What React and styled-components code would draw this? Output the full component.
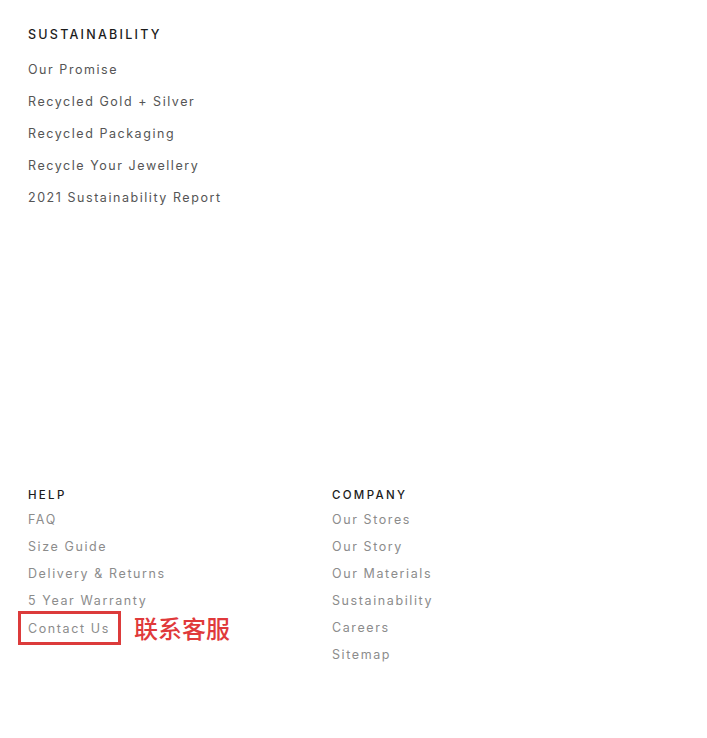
import React from 'react';
import styled, { createGlobalStyle } from 'styled-components';

const sustainability = [
  'Our Promise',
  'Recycled Gold + Silver',
  'Recycled Packaging',
  'Recycle Your Jewellery',
  '2021 Sustainability Report',
];

const help = ['FAQ', 'Size Guide', 'Delivery & Returns', '5 Year Warranty'];

const company = ['Our Stores', 'Our Story', 'Our Materials', 'Sustainability', 'Careers', 'Sitemap'];

export default function App() {
  return (
    <Page>
      <GlobalStyle />
      <Section>
        <Heading>SUSTAINABILITY</Heading>
        <TopList>
          {sustainability.map((item) => (
            <TopLink key={item}>{item}</TopLink>
          ))}
        </TopList>
      </Section>

      <FooterGrid>
        <Column>
          <SmallHeading>HELP</SmallHeading>
          <FooterList>
            {help.map((item) => (
              <FooterLink key={item}>{item}</FooterLink>
            ))}
            <AnnotatedRow>
              <Highlight>
                <FooterLink>Contact Us</FooterLink>
              </Highlight>
              <Note>联系客服</Note>
            </AnnotatedRow>
          </FooterList>
        </Column>
        <Column>
          <SmallHeading>COMPANY</SmallHeading>
          <FooterList>
            {company.map((item) => (
              <FooterLink key={item}>{item}</FooterLink>
            ))}
          </FooterList>
        </Column>
      </FooterGrid>
    </Page>
  );
}

const GlobalStyle = createGlobalStyle`
  body {
    margin: 0;
    background: #ffffff;
    font-family: Inter, 'Noto Sans', sans-serif;
  }
`;

const Page = styled.div`
  width: 707px;
  height: 738px;
  padding: 25px 0 0 28px;
  box-sizing: border-box;
  overflow: hidden;
`;

const Section = styled.div`
  display: flex;
  flex-direction: column;
`;

const Heading = styled.div`
  font-size: 12.5px;
  line-height: 20px;
  font-weight: 500;
  letter-spacing: 2.25px;
  color: #1c1c1c;
`;

const TopList = styled.div`
  display: flex;
  flex-direction: column;
  margin-top: 9px;
`;

const TopLink = styled.div`
  font-size: 12.5px;
  line-height: 32px;
  letter-spacing: 1.55px;
  color: #555555;
`;

const FooterGrid = styled.div`
  display: grid;
  grid-template-columns: 304px 304px;
  margin-top: 271px;
`;

const Column = styled.div`
  display: flex;
  flex-direction: column;
`;

const SmallHeading = styled.div`
  font-size: 11.5px;
  line-height: 20px;
  font-weight: 500;
  letter-spacing: 2.3px;
  color: #1c1c1c;
`;

const FooterList = styled.div`
  display: flex;
  flex-direction: column;
  margin-top: 1px;
`;

const FooterLink = styled.div`
  font-size: 12.5px;
  line-height: 27px;
  letter-spacing: 1.6px;
  color: #8c8c8c;
`;

const AnnotatedRow = styled.div`
  display: flex;
  align-items: center;
  gap: 13px;
  margin-left: -10px;
`;

const Highlight = styled.div`
  display: flex;
  align-items: center;
  height: 34px;
  width: 103px;
  box-sizing: border-box;
  border: 3px solid #dc3b3b;
  padding-left: 7px;
  margin: -3px 0 -4px;
`;

const Note = styled.div`
  font-family: 'Noto Sans CJK SC', sans-serif;
  font-size: 24px;
  font-weight: 500;
  color: #e0393b;
  line-height: 27px;
`;
